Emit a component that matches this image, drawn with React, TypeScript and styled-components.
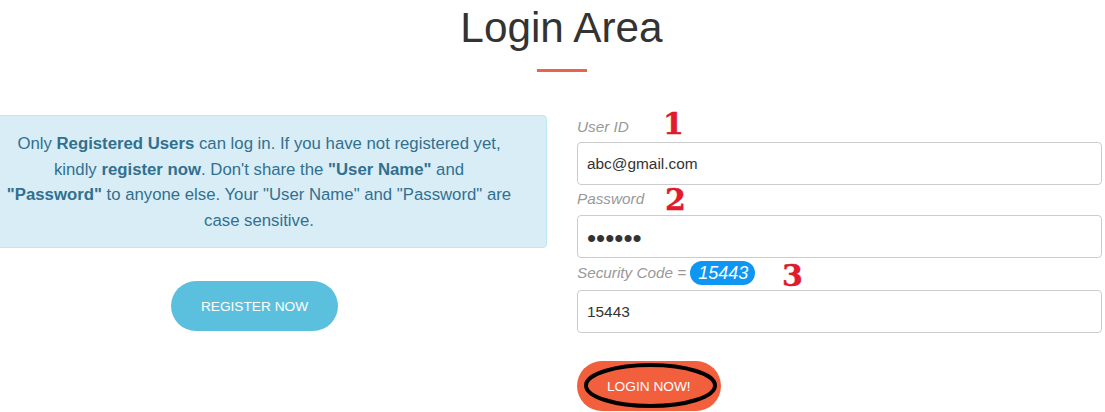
import React from "react";
import styled, { createGlobalStyle } from "styled-components";

const GlobalStyle = createGlobalStyle`
  html, body {
    margin: 0;
    padding: 0;
    background: #fff;
    overflow: hidden;
  }
  body {
    font-family: "Liberation Sans", Arial, sans-serif;
    color: #333;
  }
`;

const Page = styled.div`
  width: 1105px;
  height: 412px;
  overflow: hidden;
`;

const Title = styled.h1`
  margin: 0;
  padding: 5px 0 0 18px;
  font-size: 42.3px;
  font-weight: 400;
  line-height: 46px;
  text-align: center;
  color: #333;
`;

const Divider = styled.div`
  width: 50px;
  height: 3px;
  margin: 18px 0 0 537px;
  background: #e8644a;
`;

const Columns = styled.div`
  display: grid;
  grid-template-columns: 576px 525px;
  column-gap: 30px;
  margin: 43px 0 0 -29px;
`;

const InfoColumn = styled.div`
  display: flex;
  flex-direction: column;
  align-items: center;
`;

const Notice = styled.div`
  box-sizing: border-box;
  width: 100%;
  height: 133px;
  padding: 15px 34px 0;
  background: #d9edf7;
  border: 1px solid #bce8f1;
  border-radius: 4px;
  color: #31708f;
  font-size: 16.75px;
  line-height: 25.5px;
  text-align: center;

  b {
    font-weight: 700;
  }
`;

const PillButton = styled.button<{ $color: string }>`
  height: 50px;
  padding: 0 30px;
  border: none;
  border-radius: 25px;
  background: ${(props) => props.$color};
  color: #fff;
  font-family: inherit;
  font-size: 13.7px;
  text-transform: uppercase;
`;

const RegisterButton = styled(PillButton)`
  margin: 33px 9px 0 0;
`;

const FormColumn = styled.form`
  display: flex;
  flex-direction: column;
`;

const LabelRow = styled.div<{ $height: number }>`
  position: relative;
  box-sizing: border-box;
  display: flex;
  align-items: center;
  height: ${(props) => props.$height}px;
  padding-bottom: 3px;
  color: #999;
  font-size: 15.3px;
  font-style: italic;
`;

const Code = styled.span`
  margin: 1px 0 0 4px;
  padding: 0 7px 0 8px;
  height: 24px;
  line-height: 24px;
  border-radius: 12px;
  background: #0d96f2;
  color: #fff;
  font-size: 18px;
`;

const Marker = styled.span<{ $left: number; $top: number }>`
  position: absolute;
  left: ${(props) => props.$left}px;
  top: ${(props) => props.$top}px;
  color: #e31b2d;
  font-family: "DejaVu Serif", "Liberation Serif", serif;
  font-size: 30px;
  font-style: normal;
  font-weight: 700;
  line-height: 34px;
  -webkit-text-stroke: 0.4px #d5132a;
`;

const Field = styled.input`
  box-sizing: border-box;
  width: 100%;
  height: 43px;
  padding: 0 9px;
  border: 1px solid #ccc;
  border-radius: 4px;
  background: #fff;
  color: #333;
  font-family: inherit;
  font-size: 15.4px;
  outline: none;
`;

const PasswordField = styled(Field)`
  padding-top: 3px;
  font-size: 26px;
`;

const LoginWrap = styled.div`
  position: relative;
  align-self: flex-start;
  margin-top: 28px;
`;

const Scribble = styled.svg`
  position: absolute;
  left: 7px;
  top: 1px;
  pointer-events: none;
`;

const App: React.FC = () => {
  return (
    <Page>
      <GlobalStyle />
      <Title>Login Area</Title>
      <Divider />
      <Columns>
        <InfoColumn>
          <Notice>
            Only <b>Registered Users</b> can log in. If you have not registered
            yet, kindly <b>register now</b>. Don't share the <b>"User Name"</b>{" "}
            and <b>"Password"</b> to anyone else. Your "User Name" and
            "Password" are case sensitive.
          </Notice>
          <RegisterButton type="button" $color="#5bc0de">
            Register Now
          </RegisterButton>
        </InfoColumn>
        <FormColumn>
          <LabelRow $height={27}>
            User ID
            <Marker $left={86} $top={-8}>
              1
            </Marker>
          </LabelRow>
          <Field readOnly value="abc@gmail.com" />
          <LabelRow $height={30}>
            Password
            <Marker $left={88} $top={-2}>
              2
            </Marker>
          </LabelRow>
          <PasswordField readOnly type="password" value="123456" />
          <LabelRow $height={32}>
            Security Code =<Code>15443</Code>
            <Marker $left={205} $top={1}>
              3
            </Marker>
          </LabelRow>
          <Field readOnly value="15443" />
          <LoginWrap>
            <PillButton type="button" $color="#f15f3d">
              Login Now!
            </PillButton>
            <Scribble width="134" height="48" viewBox="0 0 134 48">
              <ellipse
                cx="66.5"
                cy="23.5"
                rx="64.5"
                ry="20.5"
                fill="none"
                stroke="#000"
                strokeWidth="4"
              />
            </Scribble>
          </LoginWrap>
        </FormColumn>
      </Columns>
    </Page>
  );
};

export default App;
